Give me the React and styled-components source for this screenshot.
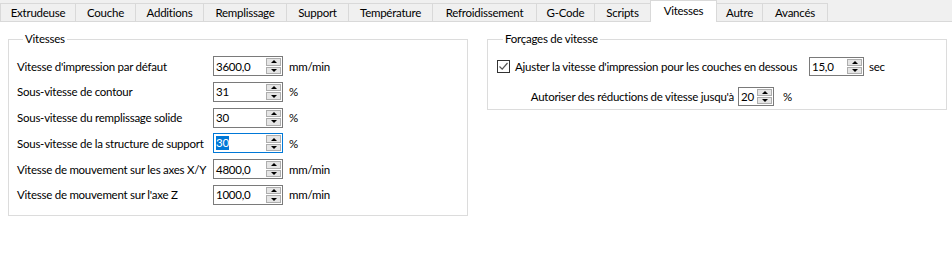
import { Fragment } from 'react';
import styled, { createGlobalStyle } from 'styled-components';

const GlobalStyle = createGlobalStyle`
  html, body {
    margin: 0;
    padding: 0;
    background: #ffffff;
  }
  body {
    font-family: Lato, "Liberation Sans", Arial, sans-serif;
    font-size: 11.5px;
    letter-spacing: -0.25px;
    color: #000;
  }
`;

const Window = styled.div`
  width: 952px;
  height: 267px;
  display: flex;
  flex-direction: column;
  background: #ffffff;
  overflow: hidden;
`;

const TabBar = styled.div`
  display: flex;
  align-items: flex-end;
  height: 21px;
  background: #f0f0f0;
  position: relative;
  z-index: 1;
`;

const Tab = styled.div`
  box-sizing: border-box;
  width: ${(p) => p.$w}px;
  height: ${(p) => (p.$active ? 22 : 18)}px;
  margin-bottom: ${(p) => (p.$active ? -1 : 0)}px;
  display: flex;
  align-items: center;
  justify-content: center;
  padding-bottom: ${(p) => (p.$active ? 2 : 0)}px;
  background: ${(p) => (p.$active ? '#ffffff' : '#f0f0f0')};
  border: 1px solid #d9d9d9;
  border-bottom: none;
  margin-left: -1px;
  white-space: nowrap;

  &:first-child {
    margin-left: 0;
  }
`;

const Pane = styled.div`
  flex: 1;
  border-top: 1px solid #d9d9d9;
  display: flex;
  align-items: flex-start;
  gap: 19px;
  padding: 9px 0 0 8px;
`;

const Group = styled.fieldset`
  box-sizing: border-box;
  width: ${(p) => p.$w}px;
  height: ${(p) => p.$h}px;
  margin: 0;
  padding: ${(p) => p.$pad};
  border: 1px solid #dcdcdc;
  border-radius: 0;
  min-width: 0;
`;

const Legend = styled.legend`
  padding: 0 2px;
  margin-left: 6px;
  line-height: 16px;
`;

const FormGrid = styled.div`
  display: grid;
  grid-template-columns: 196px 70px auto;
  grid-auto-rows: 20px;
  row-gap: 5.8px;
  align-items: center;
`;

const Label = styled.span`
  white-space: nowrap;
`;

const Unit = styled.span`
  white-space: nowrap;
  margin-left: 6px;
`;

const SpinBox = styled.div`
  box-sizing: border-box;
  width: ${(p) => p.$w}px;
  height: ${(p) => p.$h || 20}px;
  display: flex;
  align-items: stretch;
  border: 1px solid ${(p) => (p.$focus ? '#0078d7' : '#7a7a7a')};
  background: #ffffff;
`;

const SpinValue = styled.div`
  flex: 1;
  display: flex;
  align-items: center;
  padding-left: 2px;
  white-space: nowrap;
`;

const Selected = styled.span`
  background: #0078d7;
  color: #ffffff;
  line-height: 14px;
`;

const SpinButtons = styled.div`
  width: 15px;
  display: flex;
  flex-direction: column;
  padding: 1px 1px 1px 0;
  gap: 1px;
`;

const SpinButton = styled.div`
  flex: 1;
  display: flex;
  align-items: center;
  justify-content: center;
  background: #e5e5e5;
  border: 1px solid #adadad;
`;

const Arrow = styled.span`
  width: 0;
  height: 0;
  border-left: 3px solid transparent;
  border-right: 3px solid transparent;
  ${(p) =>
    p.$down
      ? 'border-top: 3px solid #000;'
      : 'border-bottom: 3px solid #000;'}
`;

const Stack = styled.div`
  display: flex;
  flex-direction: column;
  gap: 11px;
  padding-top: 10px;
`;

const Row = styled.div`
  display: flex;
  align-items: center;
  padding-left: ${(p) => p.$indent || 0}px;
`;

const CheckBox = styled.span`
  box-sizing: border-box;
  width: 13px;
  height: 13px;
  border: 1px solid #333;
  background: #fff;
  display: flex;
  align-items: center;
  justify-content: center;
  margin-right: 5px;
`;

const FixedLabel = styled.span`
  box-sizing: border-box;
  width: ${(p) => p.$w}px;
  white-space: nowrap;
  text-align: ${(p) => (p.$right ? 'right' : 'left')};
  padding-right: ${(p) => (p.$right ? 4 : 0)}px;
`;

const TrailUnit = styled.span`
  margin-left: ${(p) => p.$gap}px;
`;

const tabs = [
  ['Extrudeuse', 76],
  ['Couche', 61],
  ['Additions', 69],
  ['Remplissage', 84],
  ['Support', 63],
  ['Température', 85],
  ['Refroidissement', 105],
  ['G-Code', 59],
  ['Scripts', 57],
  ['Vitesses', 67],
  ['Autre', 47],
  ['Avancés', 66],
];

const speeds = [
  { label: "Vitesse d'impression par défaut", value: '3600,0', unit: 'mm/min' },
  { label: 'Sous-vitesse de contour', value: '31', unit: '%' },
  { label: 'Sous-vitesse du remplissage solide', value: '30', unit: '%' },
  { label: 'Sous-vitesse de la structure de support', value: '30', unit: '%', focus: true },
  { label: 'Vitesse de mouvement sur les axes X/Y', value: '4800,0', unit: 'mm/min' },
  { label: "Vitesse de mouvement sur l'axe Z", value: '1000,0', unit: 'mm/min' },
];

const Spin = ({ value, w, h, focus }) => (
  <SpinBox $w={w} $h={h} $focus={focus}>
    <SpinValue>{focus ? <Selected>{value}</Selected> : value}</SpinValue>
    <SpinButtons>
      <SpinButton>
        <Arrow />
      </SpinButton>
      <SpinButton>
        <Arrow $down />
      </SpinButton>
    </SpinButtons>
  </SpinBox>
);

const CheckMark = () => (
  <svg width="11" height="11" viewBox="0 0 11 11">
    <path d="M1.5 5.5 L4.2 8.2 L9.5 2" fill="none" stroke="#555" strokeWidth="1.2" />
  </svg>
);

export default function App() {
  return (
    <>
      <GlobalStyle />
      <Window>
        <TabBar>
          {tabs.map(([name, w]) => (
            <Tab key={name} $w={w} $active={name === 'Vitesses'}>
              {name}
            </Tab>
          ))}
        </TabBar>
        <Pane>
          <Group $w={460} $h={185} $pad="9px 8px 10px 8px">
            <Legend>Vitesses</Legend>
            <FormGrid>
              {speeds.map((s) => (
                <Fragment key={s.label}>
                  <Label>{s.label}</Label>
                  <Spin value={s.value} w={70} focus={s.focus} />
                  <Unit>{s.unit}</Unit>
                </Fragment>
              ))}
            </FormGrid>
          </Group>
          <Group $w={460} $h={79} $pad="0 8px 0 9px">
            <Legend>Forçages de vitesse</Legend>
            <Stack>
              <Row>
                <CheckBox>
                  <CheckMark />
                </CheckBox>
                <FixedLabel $w={294}>
                  Ajuster la vitesse d'impression pour les couches en dessous
                </FixedLabel>
                <Spin value="15,0" w={55} h={19} />
                <TrailUnit $gap={5}>sec</TrailUnit>
              </Row>
              <Row $indent={18}>
                <FixedLabel $w={223} $right>
                  Autoriser des réductions de vitesse jusqu'à
                </FixedLabel>
                <Spin value="20" w={36} h={19} />
                <TrailUnit $gap={9}>%</TrailUnit>
              </Row>
            </Stack>
          </Group>
        </Pane>
      </Window>
    </>
  );
}
